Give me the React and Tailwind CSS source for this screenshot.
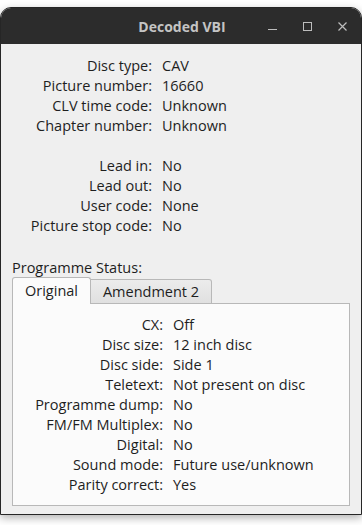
import React from 'react';

const discRows = [
  ['Disc type:', 'CAV'],
  ['Picture number:', '16660'],
  ['CLV time code:', 'Unknown'],
  ['Chapter number:', 'Unknown'],
  [null, null],
  ['Lead in:', 'No'],
  ['Lead out:', 'No'],
  ['User code:', 'None'],
  ['Picture stop code:', 'No'],
];

const statusRows = [
  ['CX:', 'Off'],
  ['Disc size:', '12 inch disc'],
  ['Disc side:', 'Side 1'],
  ['Teletext:', 'Not present on disc'],
  ['Programme dump:', 'No'],
  ['FM/FM Multiplex:', 'No'],
  ['Digital:', 'No'],
  ['Sound mode:', 'Future use/unknown'],
  ['Parity correct:', 'Yes'],
];

function FieldGrid({ rows, labelWidth }) {
  return (
    <div className={`grid ${labelWidth} gap-x-[10px] leading-[20px]`}>
      {rows.map(([label, value], i) => (
        <React.Fragment key={i}>
          <div className="text-right whitespace-nowrap h-[20px]">{label}</div>
          <div className="whitespace-nowrap h-[20px]">{value}</div>
        </React.Fragment>
      ))}
    </div>
  );
}

function TitleBar() {
  return (
    <div className="relative h-[36px] bg-[#2c2c2c] flex items-center justify-center">
      <span className="font-bold text-[14px] text-[#c4c4c4] pl-[2px]">Decoded VBI</span>
      <div className="absolute right-[14px] top-0 h-full flex items-center gap-[26px]">
        <svg width="9" height="9" viewBox="0 0 9 9" className="mt-[1px]">
          <line x1="0" y1="7.5" x2="9" y2="7.5" stroke="#bdbdbd" strokeWidth="1" />
        </svg>
        <svg width="9" height="9" viewBox="0 0 9 9">
          <rect x="0.5" y="0.5" width="8" height="8" fill="none" stroke="#bdbdbd" strokeWidth="1" />
        </svg>
        <svg width="9" height="9" viewBox="0 0 9 9">
          <path d="M0.5 0.5 L8.5 8.5 M8.5 0.5 L0.5 8.5" stroke="#bdbdbd" strokeWidth="1.2" />
        </svg>
      </div>
    </div>
  );
}

export default function App() {
  return (
    <div className="w-[362px] h-[525px] bg-white overflow-hidden" style={{ fontFamily: '"Open Sans", "Noto Sans", sans-serif' }}>
      <div className="mt-[7px] h-[508px] rounded-t-[11px] border border-[#262626] bg-[#efefef] overflow-hidden shadow-[0_3px_9px_rgba(0,0,0,0.3)] flex flex-col">
        <TitleBar />
        <div className="flex-1 px-[11px] pt-[12px] text-[14.5px] text-[#1e1e1e]">
          <div className="-ml-[11px]">
            <FieldGrid rows={discRows} labelWidth="grid-cols-[151px_1fr]" />
          </div>

          <div className="mt-[22px] leading-[19px]">Programme Status:</div>

          <div className="flex items-end">
            <div className="relative z-10 -mb-px w-[79px] h-[27px] bg-[#fbfbfb] border border-b-0 border-[#b8b8b8] rounded-t-[3px] flex items-center justify-center">
              Original
            </div>
            <div className="-mb-px w-[121px] h-[25px] bg-gradient-to-b from-[#ececec] to-[#e0e0e0] border border-l-0 border-[#b8b8b8] rounded-tr-[3px] flex items-center justify-center">
              Amendment 2
            </div>
          </div>

          <div className="border border-[#b8b8b8] bg-[#fbfbfb] pt-[11px] pb-[10px]">
            <FieldGrid rows={statusRows} labelWidth="grid-cols-[150px_1fr]" />
          </div>
        </div>
      </div>
    </div>
  );
}
